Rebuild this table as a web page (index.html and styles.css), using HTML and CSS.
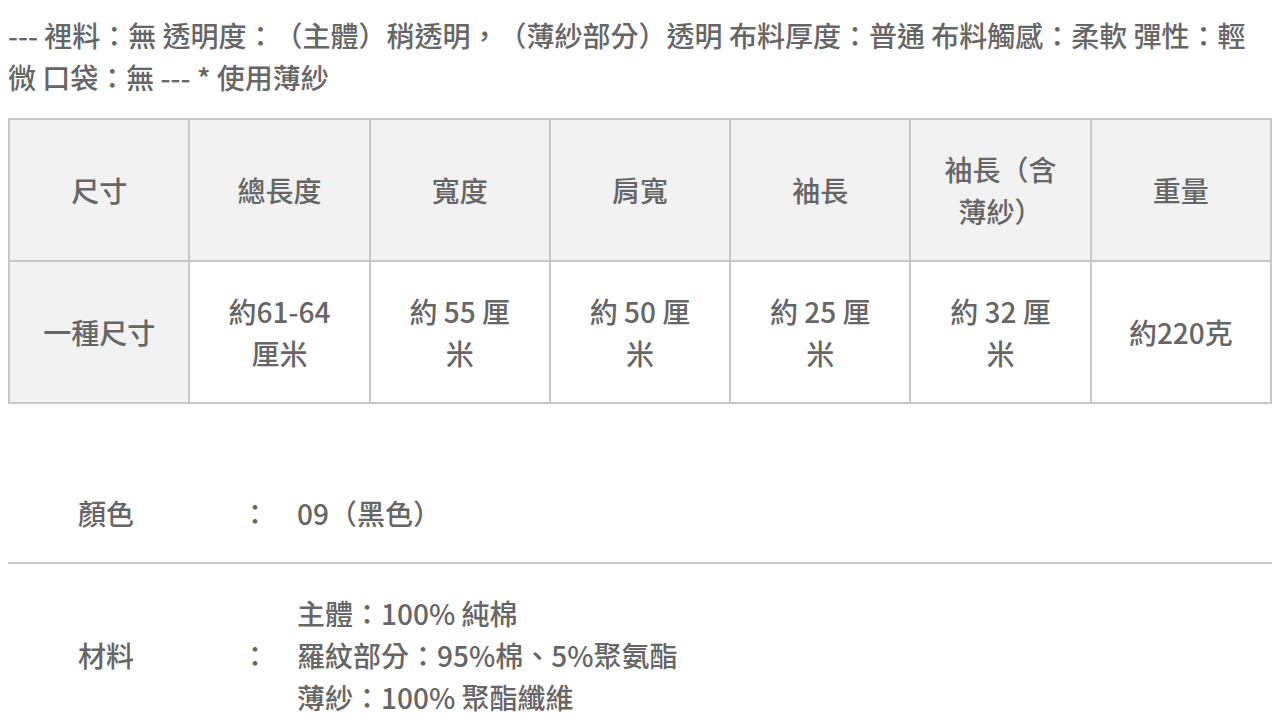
FILE: index.html
```html
<!DOCTYPE html>
<html lang="zh-Hant">
<head>
<meta charset="utf-8">
<link rel="stylesheet" href="styles.css">
</head>
<body>
<div class="page">
  <p class="desc">--- 裡料：無 透明度：（主體）稍透明，（薄紗部分）透明 布料厚度：普通 布料觸感：柔軟 彈性：輕微 口袋：無 --- * 使用薄紗</p>
  <table class="size-table">
    <tr class="head">
      <th>尺寸</th><th>總長度</th><th>寬度</th><th>肩寬</th><th>袖長</th><th>袖長（含薄紗）</th><th>重量</th>
    </tr>
    <tr>
      <th>一種尺寸</th><td>約61-64 厘米</td><td>約 55 厘米</td><td>約 50 厘米</td><td>約 25 厘米</td><td>約 32 厘米</td><td>約220克</td>
    </tr>
  </table>
  <dl class="specs">
    <div class="spec-row">
      <dt>顏色</dt><dd class="colon">：</dd><dd class="val">09（黑色）</dd>
    </div>
    <div class="spec-row">
      <dt>材料</dt><dd class="colon">：</dd><dd class="val">主體：100% 純棉<br>羅紋部分：95%棉、5%聚氨酯<br>薄紗：100% 聚酯纖維</dd>
    </div>
  </dl>
</div>
</body>
</html>
```

FILE: styles.css
```css
html, body {
  margin: 0;
  padding: 0;
  background: #fff;
}
body {
  font-family: "Noto Sans CJK TC", "Noto Sans", sans-serif;
  font-size: 28px;
  line-height: 42px;
  color: #666;
  font-weight: 500;
  text-spacing-trim: space-all;
}
.page {
  padding: 14px 8px 0 8px;
}
.desc {
  margin: 0 0 20px 0;
}
.size-table {
  width: 100%;
  border-collapse: collapse;
  table-layout: fixed;
  border: 2px solid #c8c8c8;
}
.size-table th,
.size-table td {
  border: 2px solid #c8c8c8;
  padding: 28px 30px;
  text-align: center;
  vertical-align: middle;
  font-weight: 500;
  height: 84px;
}
.size-table th {
  background: #f2f2f2;
}
.size-table td {
  background: #fff;
}
.specs {
  margin: 60px 0 0 0;
}
.spec-row {
  display: flex;
  align-items: center;
  padding: 28px 0;
}
.spec-row + .spec-row {
  border-top: 2px solid #c8c8c8;
}
.specs dt {
  width: 233px;
  padding-left: 70px;
  box-sizing: border-box;
  flex: none;
}
.specs dd {
  margin: 0;
}
.specs .colon {
  width: 56px;
  flex: none;
}
.specs .val {
  flex: 1;
}
```
